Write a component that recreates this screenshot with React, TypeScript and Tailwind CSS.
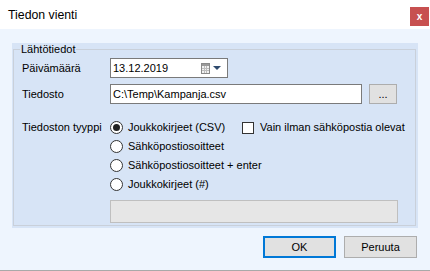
import React from "react";

function Radio({ checked, label }: { checked?: boolean; label: string }) {
  return (
    <div className="flex items-center h-[19px]">
      <div className="w-[13px] h-[13px] rounded-full border border-[#333] bg-white flex items-center justify-center shrink-0">
        {checked && <div className="w-[7px] h-[7px] rounded-full bg-[#222]" />}
      </div>
      <span className="ml-[5px] whitespace-nowrap">{label}</span>
    </div>
  );
}

export default function App() {
  return (
    <div className="w-[430px] h-[271px] bg-[#eef5fe] flex flex-col font-['Liberation_Sans',sans-serif] text-[11px] leading-[13px] text-black border-b border-[#a9a9a9] overflow-hidden">
      <div className="h-[29px] bg-white flex justify-between shrink-0">
        <span className="pl-[8px] pt-[8px] text-[12.3px] leading-[14px]">Tiedon vienti</span>
        <div className="mt-[7px] mr-[1px] w-[19px] h-[19px] bg-[#c75050] text-white flex items-center justify-center text-[10px] font-bold leading-none">
          x
        </div>
      </div>
      <div className="flex-1 pt-[14px] pl-[12px]">
        <div className="w-[406px] h-[185px] bg-[#d7e4f6] pl-px pr-[2px] pb-[2px] flex">
          <fieldset className="flex-1 border border-[#c9d0da] m-0 min-w-0 pl-[8px] pr-0 pb-0 pt-0">
            <legend className="ml-[-2px] px-[1px] leading-[13px]">Lähtötiedot</legend>
            <div className="mt-[2px] flex items-center h-[20px]">
              <span className="w-[88px] shrink-0">Päivämäärä</span>
              <div className="w-[118px] h-[20px] border border-[#7a7a7a] bg-white flex items-center justify-between pl-[2px] pr-[6px]">
                <span>13.12.2019</span>
                <div className="flex items-center gap-[3px]">
                  <svg width="9" height="11" viewBox="0 0 9 11">
                    <rect x="0.5" y="0.5" width="8" height="10" fill="#f2f2f2" stroke="#8a8a8a" />
                    <rect x="1" y="1" width="7" height="2" fill="#9a9a9a" />
                    <g stroke="#bdbdbd" strokeWidth="1">
                      <line x1="3.5" y1="3" x2="3.5" y2="10" />
                      <line x1="5.5" y1="3" x2="5.5" y2="10" />
                      <line x1="1" y1="5.5" x2="8" y2="5.5" />
                      <line x1="1" y1="7.5" x2="8" y2="7.5" />
                    </g>
                  </svg>
                  <svg width="8" height="4" viewBox="0 0 8 4">
                    <polygon points="0,0 8,0 4,4" fill="#2e4a6e" />
                  </svg>
                </div>
              </div>
            </div>
            <div className="mt-[6px] flex items-center h-[20px]">
              <span className="w-[88px] shrink-0">Tiedosto</span>
              <div className="w-[252px] h-[20px] border border-[#7a7a7a] bg-white flex items-center pl-[2px]">
                {"C:\\Temp\\Kampanja.csv"}
              </div>
              <div className="ml-[7px] w-[28px] h-[20px] border border-[#adadad] bg-[#e1e1e1] flex items-center justify-center">
                ...
              </div>
            </div>
            <div className="mt-[14px] flex">
              <div className="w-[88px] h-[19px] flex items-center shrink-0">Tiedoston tyyppi</div>
              <div className="w-[132px] flex flex-col shrink-0">
                <Radio checked label="Joukkokirjeet (CSV)" />
                <Radio label="Sähköpostiosoitteet" />
                <Radio label="Sähköpostiosoitteet + enter" />
                <Radio label="Joukkokirjeet (#)" />
              </div>
              <div className="flex items-center h-[19px]">
                <div className="w-[12px] h-[12px] border border-[#333] bg-white shrink-0" />
                <span className="ml-[6px] whitespace-nowrap">Vain ilman sähköpostia olevat</span>
              </div>
            </div>
            <div className="mt-[6px] ml-[88px] w-[288px] h-[23px] bg-[#e6e6e6] border border-[#bfbfbf]" />
          </fieldset>
        </div>
        <div className="mt-[8px] flex justify-end gap-[8px] pr-[13px]">
          <div className="w-[73px] h-[22px] border-2 border-[#0078d7] bg-[#e1e1e1] flex items-center justify-center">OK</div>
          <div className="w-[73px] h-[22px] border border-[#adadad] bg-[#e1e1e1] flex items-center justify-center">Peruuta</div>
        </div>
      </div>
    </div>
  );
}
